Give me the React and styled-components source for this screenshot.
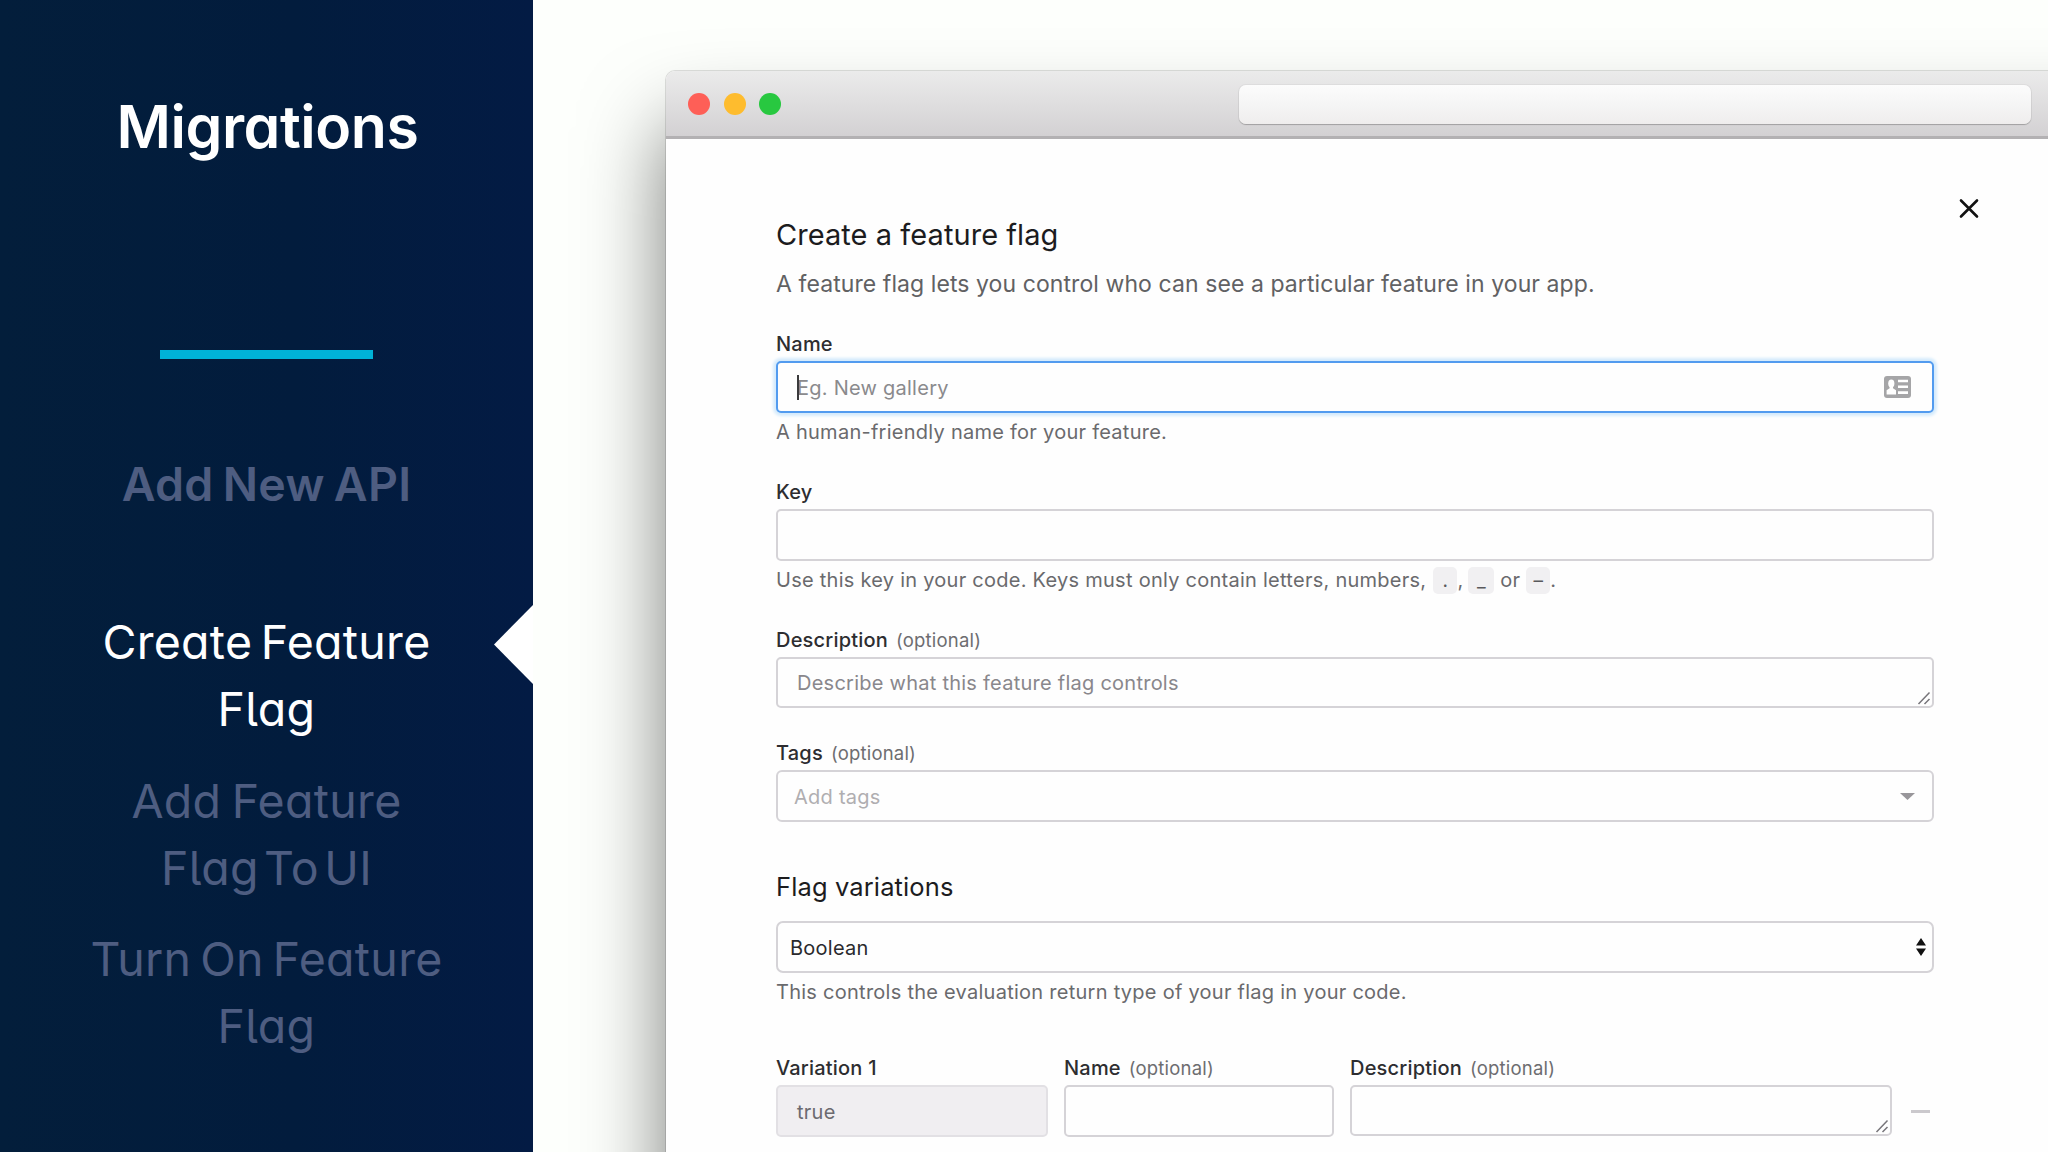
import React from "react";
import styled, { createGlobalStyle } from "styled-components";

const Global = createGlobalStyle`
  *, *::before, *::after { box-sizing: border-box; }
  html, body { margin: 0; padding: 0; overflow: hidden; }
  body { font-family: Inter, "Liberation Sans", sans-serif; }
`;

const Page = styled.div`
  display: flex;
  width: 2048px;
  height: 1152px;
  overflow: hidden;
  background: #fdfffc;
`;

const Sidebar = styled.aside`
  position: relative;
  flex: none;
  width: 533px;
  height: 1152px;
  display: flex;
  flex-direction: column;
  align-items: center;
  padding-top: 90px;
  text-align: center;
  font-feature-settings: "cv11", "cv05";
  background: linear-gradient(90deg, #031e3b 0%, #021c3d 55%, #031b44 100%);
`;

const SidebarTitle = styled.h1`
  margin: 0;
  padding-left: 2px;
  font-size: 59px;
  line-height: 74px;
  font-weight: 600;
  letter-spacing: -0.45px;
  color: #fff;
`;

const Accent = styled.div`
  width: 213px;
  height: 9px;
  margin-top: 186px;
  background: #00b3d8;
`;

const Steps = styled.ol`
  list-style: none;
  margin: 92px 0 0;
  padding: 0;
`;

const Step = styled.li`
  height: 158.4px;
  font-size: 46.5px;
  line-height: 67px;
  font-weight: ${(p) => (p.$done ? 600 : 400)};
  letter-spacing: 0.3px;
  color: ${(p) => (p.$active ? "#fff" : "#4e5d81")};
`;

const Line = styled.div`
  white-space: nowrap;
  word-spacing: ${(p) => p.$wordGap}px;
`;

const Pointer = styled.svg`
  position: absolute;
  right: 0;
  top: 605px;
  width: 39px;
  height: 79px;
`;

const Main = styled.main`
  flex: 1;
  min-width: 0;
  display: flex;
  padding: 71px 0 0 133px;
`;

const Window = styled.section`
  flex: none;
  width: 1680px;
  height: 1300px;
  border-radius: 9px 9px 0 0;
  background: #fefefe;
  box-shadow: 0 0 0 1px rgba(0, 0, 0, 0.12), 0 55px 82px rgba(0, 0, 0, 0.52);
`;

const TitleBar = styled.header`
  display: flex;
  align-items: center;
  height: 68px;
  padding-left: 22px;
  border-radius: 9px 9px 0 0;
  border-bottom: 3px solid #b3b1b3;
  background: linear-gradient(#ebebeb, #d3d1d3);
`;

const Lights = styled.div`
  display: flex;
  gap: 13.5px;
`;

const Light = styled.span`
  width: 22px;
  height: 22px;
  border-radius: 50%;
  background: ${(p) => p.$color};
`;

const AddressBar = styled.div`
  width: 792px;
  height: 39px;
  margin-left: 457.5px;
  margin-top: 1px;
  border-radius: 7px;
  background: linear-gradient(#fcfcfc, #f5f5f5 50%, #efeded);
  box-shadow: 0 1px 1px rgba(0, 0, 0, 0.22), 0 0 0 1px rgba(0, 0, 0, 0.04);
`;

const Content = styled.div`
  position: relative;
  width: 1267.5px;
  padding: 78px 0 0 110px;
`;

const CloseButton = styled.button`
  position: absolute;
  left: 1290px;
  top: 56px;
  width: 26px;
  height: 26px;
  padding: 0;
  border: 0;
  background: none;
  svg { display: block; }
`;

const Title = styled.h2`
  margin: 0;
  font-size: 29px;
  line-height: 36px;
  font-weight: 400;
  letter-spacing: 0.06px;
  color: #1c1c1e;
`;

const Subtitle = styled.p`
  margin: 16px 0 31px;
  font-size: 23px;
  line-height: 30px;
  letter-spacing: 0.08px;
  color: #616163;
`;

const Field = styled.div`
  width: ${(p) => (p.$width ? p.$width + "px" : "auto")};
  flex: none;
  margin-bottom: ${(p) => p.$after || 0}px;
`;

const Label = styled.div`
  height: 31px;
  padding-top: 1px;
  font-size: 20px;
  line-height: 26px;
  font-weight: 500;
  letter-spacing: 0.2px;
  white-space: nowrap;
  color: #2d2d30;
`;

const Optional = styled.span`
  margin-left: 8px;
  font-size: 18.5px;
  font-weight: 400;
  letter-spacing: 0.2px;
  color: #6d6d70;
`;

const Control = styled.div`
  position: relative;
  display: flex;
  align-items: center;
  justify-content: space-between;
  height: ${(p) => p.$height || 52}px;
  padding: 0 ${(p) => p.$right || 20}px 0 ${(p) => p.$left || 19}px;
  border: 2px solid #d5d3d7;
  border-radius: ${(p) => p.$radius || 5}px;
  background: ${(p) => (p.$disabled ? "#f0eef1" : "#fefefe")};
  ${(p) => p.$disabled && "border-color: #e2e0e4;"}
  ${(p) => p.$focused && "border-color: #529bef; box-shadow: 0 0 3px 3px #d5ebfc;"}
`;

const Value = styled.span`
  padding-top: ${(p) => p.$drop ?? 2}px;
  font-size: 20px;
  line-height: 26px;
  letter-spacing: 0.25px;
  white-space: nowrap;
  color: ${(p) => p.$color};
`;

const Caret = styled.span`
  position: absolute;
  left: 19px;
  top: 12px;
  width: 2px;
  height: 25px;
  background: #3a3a3c;
`;

const Grip = styled.svg`
  position: absolute;
  right: 0;
  bottom: 0;
`;

const Help = styled.p`
  margin: 6px 0 0;
  height: 26px;
  font-size: 20px;
  line-height: 26px;
  letter-spacing: 0.26px;
  white-space: nowrap;
  color: #6a6a6d;
`;

const Chip = styled.code`
  display: inline-block;
  width: ${(p) => p.$width}px;
  height: 27px;
  margin-left: ${(p) => p.$gap}px;
  line-height: 27px;
  border-radius: 5px;
  text-align: center;
  font-family: Inter, sans-serif;
  font-size: 19px;
  vertical-align: top;
  background: #f1f0f2;
  color: #59595c;
`;

const SectionTitle = styled.h3`
  margin: 49px 0 18px;
  font-size: 25.5px;
  line-height: 32px;
  font-weight: 400;
  letter-spacing: 0.12px;
  color: #1c1c1e;
`;

const VariationRow = styled.div`
  display: flex;
  gap: 16px;
  margin-top: 49px;
`;

const Remove = styled.div`
  flex: none;
  width: 19px;
  height: 3px;
  margin: 55.5px 0 0 3px;
  background: #cbc9cd;
`;

const steps = [
  { lines: [["Add New API", -3]], done: true },
  { lines: [["Create Feature", -5], ["Flag", 0]], active: true },
  { lines: [["Add Feature", -3], ["Flag To UI", -8]] },
  { lines: [["Turn On Feature", -4.5], ["Flag", 0]] },
];

function ResizeGrip() {
  return (
    <Grip width="16" height="16" viewBox="0 0 16 16" fill="none" stroke="#77757a" strokeWidth="1.5">
      <path d="M2.5 14 13.5 2.5M8.5 14 13.5 9" />
    </Grip>
  );
}

function ContactIcon() {
  return (
    <svg width="27" height="22" viewBox="0 0 27 22">
      <rect width="27" height="22" rx="3" fill="#a5a5a7" />
      <ellipse cx="7.3" cy="7.4" rx="3.1" ry="3.9" fill="#fff" />
      <path d="M5.6 10h3.4v2.2l3 2v4.2H2.6v-4.2l3-2z" fill="#fff" />
      <path d="M14 5h10M14 10.8h10M14 16.6h10" stroke="#fff" strokeWidth="2.6" />
    </svg>
  );
}

export default function App() {
  return (
    <Page>
      <Global />
      <Sidebar>
        <SidebarTitle>Migrations</SidebarTitle>
        <Accent />
        <Steps>
          {steps.map((step, i) => (
            <Step key={i} $active={step.active} $done={step.done}>
              {step.lines.map(([text, gap]) => (
                <Line key={text} $wordGap={gap}>{text}</Line>
              ))}
            </Step>
          ))}
        </Steps>
        <Pointer viewBox="0 0 39 79">
          <path d="M39 0 0 39.5 39 79z" fill="#fff" />
        </Pointer>
      </Sidebar>
      <Main>
        <Window>
          <TitleBar>
            <Lights>
              <Light $color="#fe5f57" />
              <Light $color="#febc2e" />
              <Light $color="#28c840" />
            </Lights>
            <AddressBar />
          </TitleBar>
          <Content>
            <CloseButton aria-label="Close">
              <svg width="26" height="26" viewBox="0 0 26 26" stroke="#111" strokeWidth="2.6" strokeLinecap="round">
                <path d="M5 5.5 21 21.5M21 5.5 5 21.5" />
              </svg>
            </CloseButton>
            <Title>Create a feature flag</Title>
            <Subtitle>A feature flag lets you control who can see a particular feature in your app.</Subtitle>

            <Field $after={33}>
              <Label>Name</Label>
              <Control $focused $right={21}>
                <Caret />
                <Value $color="#8a8a8d">Eg. New gallery</Value>
                <ContactIcon />
              </Control>
              <Help>A human-friendly name for your feature.</Help>
            </Field>

            <Field $after={33}>
              <Label>Key</Label>
              <Control />
              <Help>
                Use this key in your code. Keys must only contain letters, numbers,
                <Chip $width={24} $gap={7}>.</Chip>,
                <Chip $width={26} $gap={5}>_</Chip> or
                <Chip $width={24} $gap={6}>–</Chip>.
              </Help>
            </Field>

            <Field $after={31}>
              <Label>Description<Optional>(optional)</Optional></Label>
              <Control $height={51}>
                <Value $color="#89878c" $drop={0}>Describe what this feature flag controls</Value>
                <ResizeGrip />
              </Control>
            </Field>

            <Field>
              <Label>Tags<Optional>(optional)</Optional></Label>
              <Control $radius={6} $left={16} $right={16.5}>
                <Value $color="#b0aeb1">Add tags</Value>
                <svg width="15" height="8" viewBox="0 0 15 8"><path d="M0 1h15L7.5 8z" fill="#98969a" /></svg>
              </Control>
            </Field>

            <SectionTitle>Flag variations</SectionTitle>
            <Control $radius={7} $left={12} $right={6}>
              <Value $color="#2a2a2d">Boolean</Value>
              <svg width="10" height="18" viewBox="0 0 10 18"><path d="M5 0l5 7.6H0zM5 18l5-7.6H0z" fill="#111" /></svg>
            </Control>
            <Help>This controls the evaluation return type of your flag in your code.</Help>

            <VariationRow>
              <Field $width={272}>
                <Label>Variation 1</Label>
                <Control $disabled><Value $color="#6c6a70">true</Value></Control>
              </Field>
              <Field $width={270}>
                <Label>Name<Optional>(optional)</Optional></Label>
                <Control />
              </Field>
              <Field $width={542}>
                <Label>Description<Optional>(optional)</Optional></Label>
                <Control $height={50.5}><ResizeGrip /></Control>
              </Field>
              <Remove />
            </VariationRow>
          </Content>
        </Window>
      </Main>
    </Page>
  );
}
